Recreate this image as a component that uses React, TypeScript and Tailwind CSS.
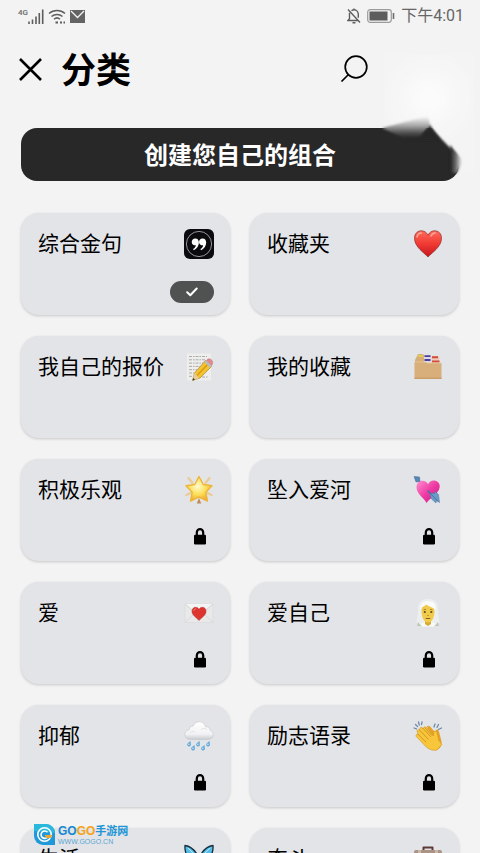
import React from "react";

const categories: { name: string; icon: React.ReactNode; state?: "selected" | "locked" }[] = [
  { name: "综合金句", icon: <QuoteIcon />, state: "selected" },
  { name: "收藏夹", icon: <HeartIcon /> },
  { name: "我自己的报价", icon: <MemoIcon /> },
  { name: "我的收藏", icon: <DividersIcon /> },
  { name: "积极乐观", icon: <StarIcon />, state: "locked" },
  { name: "坠入爱河", icon: <ArrowHeartIcon />, state: "locked" },
  { name: "爱", icon: <LoveLetterIcon />, state: "locked" },
  { name: "爱自己", icon: <VeilIcon />, state: "locked" },
  { name: "抑郁", icon: <RainIcon />, state: "locked" },
  { name: "励志语录", icon: <ClapIcon />, state: "locked" },
  { name: "生活", icon: <ButterflyIcon />, state: "locked" },
  { name: "奋斗", icon: <BriefcaseIcon />, state: "locked" },
];

function Emoji({ children }: { children: React.ReactNode }) {
  return (
    <svg viewBox="0 0 30 30" className="size-[30px] shrink-0" aria-hidden="true">
      {children}
    </svg>
  );
}

function QuoteIcon() {
  return (
    <Emoji>
      <rect x="0" y="0" width="30" height="30" rx="6" fill="#0b0b0f" />
      <circle cx="15" cy="15" r="12.6" fill="none" stroke="#b9b9bd" strokeWidth="0.8" />
      <path d="M11.4 9.500a3.400 3.400 0 1 0 .5 6.700c-.3 1.700-1.300 3-2.900 3.900l.9 1.200c3.100-1.500 5-4.500 5-7.700 0-2.500-1.400-4.100-3.500-4.100z" fill="#fff" />
      <path d="M18.700 9.500a3.400 3.400 0 1 0 .5 6.700c-.3 1.700-1.300 3-2.900 3.900l.9 1.200c3.100-1.500 5-4.500 5-7.700 0-2.500-1.400-4.100-3.500-4.100z" fill="#fff" />
    </Emoji>
  );
}

function HeartIcon() {
  return (
    <Emoji>
      <defs>
        <linearGradient id="heart" x1="0" y1="0" x2="0" y2="1">
          <stop offset="0" stopColor="#ff6a5a" />
          <stop offset="0.5" stopColor="#f03a34" />
          <stop offset="1" stopColor="#c5161b" />
        </linearGradient>
      </defs>
      <path
        d="M15 28C11 23.500 1.500 18 1.500 9.200 1.500 4.500 4.600 1.800 8.300 1.800c3 0 5.400 1.600 6.700 4.400 1.300-2.800 3.700-4.400 6.700-4.400 3.700 0 6.800 2.700 6.800 7.400C28.500 18 19 23.500 15 28z"
        fill="url(#heart)"
        stroke="#8f2a2a"
        strokeWidth="0.7"
      />
      <path d="M4 8c.5-2.600 2.300-4 4.500-4M18 7c.9-1.900 2.300-3 4.200-3" stroke="#ffa79a" strokeWidth="1.400" fill="none" strokeLinecap="round" />
    </Emoji>
  );
}

function MemoIcon() {
  return (
    <Emoji>
      <path d="M3 1.500h24v27H3z" fill="#eeeeec" />
      <path
        d="M5 4.500h18M5 7.800h17M5 11.100h14M5 14.400h11M5 17.700h8M5 21h5M5 24.300h4M18 25h6"
        stroke="#a3a3a6"
        strokeWidth="0.9"
        strokeDasharray="3 1 1.500 1"
      />
      <path d="M21.500 8.500l6 6L16 26l-7.500 2.500 2-7.500z" fill="#f4c430" stroke="#9b7420" strokeWidth="0.6" />
      <path d="M24.500 11.500L13 23.500" stroke="#d99a16" strokeWidth="1.600" />
      <path d="M20.500 10l2-1.800 5.300 5.500-2 2z" fill="#b8bcc0" />
      <path d="M22.500 8.200c1.500-1.800 3.500-1.800 5-.3s1.500 3.500.2 5.500z" fill="#e7888d" stroke="#a96468" strokeWidth="0.4" />
      <path d="M10.500 21l-2 7.500L15 26.200z" fill="#e8cd9c" />
      <path d="M9.200 26l-.7 2.500 2.500-.8z" fill="#333" />
    </Emoji>
  );
}

function DividersIcon() {
  return (
    <Emoji>
      <path d="M2 8l3-6h5l2 3v6H2z" fill="#d5ae78" />
      <path d="M5.500 3h4l1 2h-6z" fill="#e3cc55" />
      <path d="M11 3h7v8h-7z" fill="#ded7ec" />
      <path d="M11.500 3.300h6v1.800h-6zM11.500 7h6v2h-6z" fill="#4c4099" />
      <path d="M18.500 4h7l1 2v5h-8z" fill="#efc9bb" />
      <path d="M19 4.300h6v2h-6zM19 8.500h7.500v2H19z" fill="#d04e38" />
      <path d="M1.500 10h11l2 1h14v16h-27z" fill="#d8ae7b" />
      <path d="M1.500 25.500h27V27h-27z" fill="#cb9e69" />
      <path d="M2 10h10.500l2 1h13.500" stroke="#eacb9f" strokeWidth="0.8" fill="none" />
    </Emoji>
  );
}

function StarIcon() {
  return (
    <Emoji>
      <defs>
        <radialGradient id="star" cx="0.45" cy="0.4" r="0.6">
          <stop offset="0" stopColor="#fffbd0" />
          <stop offset="0.55" stopColor="#fce05a" />
          <stop offset="1" stopColor="#efa62c" />
        </radialGradient>
      </defs>
      <path d="M4.500 3l4 5M25.500 3l-4 5M2.500 20l4-2M27.500 20l-4-2" stroke="#e9cd98" strokeWidth="2.400" strokeLinecap="round" />
      <path d="M15 23l2.200 5.500h-4.400z" fill="#c08a55" />
      <path
        d="M15 1.500l4.200 8 8.800 1.300-6.200 6.400 1.700 9-8.500-4-8.500 4 1.700-9L2 10.800l8.800-1.300z"
        fill="url(#star)"
        stroke="#eeb53c"
        strokeWidth="1.400"
        strokeLinejoin="round"
      />
    </Emoji>
  );
}

function ArrowHeartIcon() {
  return (
    <Emoji>
      <defs>
        <linearGradient id="pink" x1="0" y1="0" x2="1" y2="1">
          <stop offset="0" stopColor="#ff8fd0" />
          <stop offset="0.5" stopColor="#ef3aa4" />
          <stop offset="1" stopColor="#c11b80" />
        </linearGradient>
      </defs>
      <path d="M4 4l6 6" stroke="#5a7fa8" strokeWidth="1.500" />
      <path d="M1 1.500l5.500.5.500 4.500-4 .500z" fill="#5687b5" stroke="#426b91" strokeWidth="0.5" />
      <path
        d="M13.500 28C11 22.500 3.500 19 3.500 12.200c0-4 2.600-6.500 5.800-6.500 2.800 0 4.700 1.300 5.700 3.600 1.200-2.600 3.500-4 6.200-3.700 3.800.4 6 3.300 5.400 6.900-1 6.300-9.300 10.300-13.100 15.500z"
        fill="url(#pink)"
      />
      <path d="M14.500 15.500l8 8" stroke="#4773a1" strokeWidth="1.400" />
      <path d="M16.500 18l5 .5.500-2 3.500 3 1 8-3-2-.5 2.500-4.500-4z" fill="#6b9bc7" stroke="#4a74a0" strokeWidth="0.5" />
      <path d="M17 18L25 26.500" stroke="#3e6998" strokeWidth="0.8" />
    </Emoji>
  );
}

function LoveLetterIcon() {
  return (
    <Emoji>
      <path d="M1 6h28v18.500H1z" fill="#e9e9e9" stroke="#d8d8da" strokeWidth="0.6" />
      <path d="M1 24.500l10.500-10M29 24.500l-10.500-10" stroke="#d3d3d6" strokeWidth="0.8" />
      <path d="M1 6l14 12L29 6" fill="#f4f4f4" stroke="#c9c9cc" strokeWidth="0.8" />
      <path
        d="M15 22.500c-2-2.600-7-5-7-9.200 0-2.500 1.600-4 3.600-4 1.600 0 2.700.8 3.400 2.200.7-1.400 1.800-2.200 3.400-2.200 2 0 3.600 1.500 3.600 4 0 4.200-5 6.600-7 9.200z"
        fill="#dd3430"
        stroke="#a82525"
        strokeWidth="0.5"
      />
      <path d="M9.800 12.500c.2-1 1-1.700 1.900-1.700" stroke="#f58b80" strokeWidth="0.900" fill="none" strokeLinecap="round" />
    </Emoji>
  );
}

function VeilIcon() {
  return (
    <Emoji>
      <path d="M15 1C7 1 4.500 6 5 12c.3 5-1.500 9-1.500 12l2 4.500h19l2-4.500c0-3-1.800-7-1.500-12C25.500 6 23 1 15 1z" fill="#ecefee" />
      <path d="M6 28.500c0-3 3.500-4.500 9-4.500s9 1.500 9 4.500z" fill="#fafafa" />
      <path d="M4 28l1-4 4 4.500zM26 28l-1-4-4 4.500z" fill="#bccbb8" />
      <path d="M12 22h6v4l-3 2-3-2z" fill="#d8aa31" />
      <path d="M8.500 13c0-5 2.500-7.500 6.500-7.500s6.500 2.500 6.500 7.500c0 7-3 11.500-6.500 11.500S8.500 20 8.500 13z" fill="#f0cb4c" />
      <path d="M7.500 13c0-4 3-4 6-6.500 2 2.500 8 2.500 9 6.500 1-6-1.500-10-7.500-10S6.500 7 7.500 13z" fill="#fbfbfb" />
      <circle cx="11.800" cy="14" r="1.100" fill="#5f4a1c" />
      <circle cx="18.300" cy="14" r="1.100" fill="#5f4a1c" />
      <path d="M10.500 11.800l2.500-.5M17 11.300l2.500.5M14.300 17.500h1.400" stroke="#9b7320" strokeWidth="0.800" />
      <path d="M13.200 20.500h3.600" stroke="#8d5a26" strokeWidth="1.200" fill="none" strokeLinecap="round" />
    </Emoji>
  );
}

function RainIcon() {
  return (
    <Emoji>
      <defs>
        <linearGradient id="cloud" x1="0" y1="0" x2="0" y2="1">
          <stop offset="0" stopColor="#ffffff" />
          <stop offset="0.7" stopColor="#f2f2f4" />
          <stop offset="1" stopColor="#c7cacf" />
        </linearGradient>
      </defs>
      <path
        d="M6.500 18.500C3 18.500.8 16.500.8 13.600c0-2.700 1.900-4.500 4.400-4.800C5.300 6.500 7 5 9.300 5c.8-2.600 3-4.300 5.900-4.300 3.300 0 5.800 2.100 6.300 5.100 2.400-.3 4.400 1.200 4.700 3.500 1.800.6 3 2.200 3 4.300 0 2.900-2.200 4.900-5.500 4.900z"
        fill="url(#cloud)"
        stroke="#c3c6cb"
        strokeWidth="0.6"
      />
      <path d="M6 12c1.500-2 4-2 5.500-.5M17 9c1.500-2 4-2.300 6-.5" stroke="#dddfe3" strokeWidth="0.900" fill="none" />
      <g fill="#63a9d8">
        <path d="M6.500 20l.3 2.800a1.900 1.900 0 1 1-2.800-.8z" />
        <path d="M15.500 20l.3 2.800a1.900 1.900 0 1 1-2.800-.8z" />
        <path d="M25.500 20l.3 2.800a1.900 1.900 0 1 1-2.800-.8z" />
        <path d="M10.500 24l.3 2.800a1.900 1.900 0 1 1-2.800-.8z" />
        <path d="M20.500 24l.3 2.800a1.900 1.900 0 1 1-2.800-.8z" />
      </g>
      <g fill="#cfe8f7">
        <circle cx="4.900" cy="23.300" r="0.800" />
        <circle cx="13.900" cy="23.300" r="0.800" />
        <circle cx="23.900" cy="23.300" r="0.800" />
        <circle cx="8.900" cy="27.300" r="0.800" />
        <circle cx="18.900" cy="27.300" r="0.800" />
      </g>
    </Emoji>
  );
}

function ClapIcon() {
  return (
    <Emoji>
      <g stroke="#6d8ba8" strokeWidth="1.300" strokeLinecap="round">
        <path d="M5.500 1l.8 3M2.500 3.500l2 2M1 7l2.500.8M9 1L8.500 3.500M22 3l-1 3M25.500 3.500L24 6.500M28.500 7l-3 1.500" />
      </g>
      <path
        d="M14 5.500c1-1.300 2.500-.8 3.300.2l5.200 6c-.2-1.900.3-3.200 1.600-3.300 1.200 0 1.600 1 1.900 2.300l2.200 8.300c1.300 4.800-1 9-4.200 9.800z"
        fill="#e4a229"
      />
      <path
        d="M3.300 15.500c-1-1.300.6-3 2-2L4.300 11c-1-1.500 1-3.200 2.300-1.900L6.800 7.500c.5-1.500 2-1.300 3-.3l1-.2c.4-1.600 2-1.400 3-.3l6.700 8c.2-2.300-.2-4.500 1.600-4.700 1.500-.2 2 1.300 2.200 2.700l1.500 6.500 3 4.300-4.800 5.500c-3.500 1-7.500-.3-10.700-3z"
        fill="#f8c63b"
        stroke="#d2921f"
        strokeWidth="0.6"
      />
      <path d="M5.300 13.500l7.500 7.500M6.600 9.100l8.600 9M9.800 7.200l7.700 8.300M12.500 7.500l6.500 7" stroke="#cc8e20" strokeWidth="0.900" fill="none" strokeLinecap="round" />
    </Emoji>
  );
}

function ButterflyIcon() {
  return (
    <Emoji>
      <g fill="#55bde8" stroke="#172c3c" strokeWidth="1.300" strokeLinejoin="round">
        <path d="M14.500 13C11 6 6 2 1 1.500c-.5 6 2 12.500 6 14-3 2-2.500 8 1 9.500s6-3 6.500-8z" />
        <path d="M15.500 13C19 6 24 2 29 1.500c.5 6-2 12.500-6 14 3 2 2.500 8-1 9.500s-6-3-6.500-8z" />
      </g>
      <path d="M4 4l9 9M26 4l-9 9" stroke="#b5e8fa" strokeWidth="1" />
      <path d="M15 10v12" stroke="#26211f" strokeWidth="2" strokeLinecap="round" />
    </Emoji>
  );
}

function BriefcaseIcon() {
  return (
    <Emoji>
      <path d="M10.500 7V3.500h9V7" fill="none" stroke="#5d3a34" strokeWidth="2" strokeLinejoin="round" />
      <rect x="1" y="6" width="28" height="20" rx="2" fill="#ab9486" />
      <path d="M1 14h28" stroke="#735546" strokeWidth="1" />
      <path d="M5 6h3v20H5zM22 6h3v20h-3z" fill="#c9b8a8" />
      <rect x="13" y="12" width="4" height="4" fill="#d8c5a2" />
    </Emoji>
  );
}

function LockIcon() {
  return (
    <svg viewBox="0 0 12 17" className="mr-2 h-[17px] w-3" role="img" aria-label="locked">
      <path d="M2.800 8V4.400a3.200 3.200 0 0 1 6.400 0V8" fill="none" stroke="#000" strokeWidth="2.200" />
      <rect x="0" y="6.800" width="12" height="9.700" rx="1.200" fill="#000" />
    </svg>
  );
}

function CategoryCard({ name, icon, state }: (typeof categories)[number]) {
  return (
    <button className="flex h-[102px] flex-col justify-between rounded-[18px] bg-[#e3e4e8] pt-4 pr-4 pl-[17px] text-left shadow-[0_1px_3px_rgba(0,0,0,0.18)]">
      <span className="flex w-full items-start justify-between">
        <span className="text-[21px] leading-[26px] whitespace-nowrap text-black">{name}</span>
        {icon}
      </span>
      {state === "selected" && (
        <span className="mb-3 flex h-[22px] w-11 items-center justify-center self-end rounded-full bg-[#505151]">
          <svg viewBox="0 0 12 10" className="h-[10px] w-3" role="img" aria-label="selected">
            <path d="M1.200 5.200l3.100 3L10.700 1.500" fill="none" stroke="#fff" strokeWidth="2" strokeLinecap="round" strokeLinejoin="round" />
          </svg>
        </span>
      )}
      {state === "locked" && (
        <span className="mb-4 self-end">
          <LockIcon />
        </span>
      )}
    </button>
  );
}

function StatusBar() {
  return (
    <div className="flex h-8 items-center justify-between pr-4 pl-[18px] text-[#666]">
      <div className="flex items-center gap-1">
        <div className="flex items-start">
          <span className="font-['Roboto',sans-serif] text-[8px] leading-[8px] font-medium">4G</span>
          <svg viewBox="0 0 16 15" className="h-[15px] w-4" aria-hidden="true">
            <path d="M1 12.500V15M4.500 10.500V15M8 7.500V15M11.300 4V15M14.700 .5V15" stroke="#5d5d5d" strokeWidth="1.600" />
          </svg>
        </div>
        <svg viewBox="0 0 18 15" className="h-[15px] w-[18px]" fill="none" stroke="#5d5d5d" aria-hidden="true">
          <path d="M1 4.500a12 12 0 0 1 16 0M3.500 7.500a8.200 8.200 0 0 1 11 0M6 10.200a4.500 4.500 0 0 1 6 0" strokeWidth="1.500" />
          <path d="M7.500 13.500h2.500M12 13.500h2M15.500 13.500h1.500" strokeWidth="2" />
        </svg>
        <svg viewBox="0 0 15 13" className="h-[13px] w-[15px]" aria-hidden="true">
          <path d="M0 0h15v13H0z" fill="#636363" />
          <path d="M1 1l6.500 6.500L14 1" fill="none" stroke="#f3f3f3" strokeWidth="1.300" />
        </svg>
      </div>
      <div className="flex items-center gap-1.5">
        <svg viewBox="0 0 14 16" className="h-4 w-[14px]" fill="none" stroke="#5d5d5d" strokeWidth="1.400" aria-hidden="true">
          <path d="M1 1.500l12 13M2.500 4.800v6L1 12.500h10M4.500 2.700C5.200 2.200 6 1.800 7 1.800c2.600 0 4.300 2 4.300 4.500v3.500M7 .5v1.300M5.500 14.700h3" />
        </svg>
        <svg viewBox="0 0 28 14" className="h-[14px] w-7" aria-hidden="true">
          <rect x="0.700" y="0.700" width="23.600" height="12.600" rx="2.500" fill="none" stroke="#9b9b9b" strokeWidth="1.200" />
          <rect x="2.500" y="2.500" width="18" height="9" fill="#5d5d5d" />
          <path d="M26.500 4v6" stroke="#6d6d6d" strokeWidth="1.600" />
        </svg>
        <span className="font-['Roboto','Noto_Sans_CJK_SC',sans-serif] text-base leading-5">下午4:01</span>
      </div>
    </div>
  );
}

// soft light patch that fades out the end of the banner
function Smudge() {
  return (
    <svg viewBox="380 50 100 130" className="pointer-events-none absolute -top-[78px] -right-[21px] h-[130px] w-[100px]" aria-hidden="true">
      <defs>
        <radialGradient id="glow" gradientUnits="userSpaceOnUse" cx="430" cy="98" r="48">
          <stop offset="0" stopColor="#fcfcfc" />
          <stop offset="1" stopColor="#f4f4f4" />
        </radialGradient>
        <linearGradient id="fade" gradientUnits="userSpaceOnUse" x1="0" y1="117" x2="0" y2="138">
          <stop offset="0" stopColor="#f5f5f5" />
          <stop offset="0.4" stopColor="#aaa" />
          <stop offset="0.75" stopColor="#505050" />
          <stop offset="1" stopColor="#282828" />
        </linearGradient>
        <linearGradient id="side" gradientUnits="userSpaceOnUse" x1="451" y1="0" x2="462" y2="0">
          <stop offset="0" stopColor="#282828" />
          <stop offset="0.5" stopColor="#777" />
          <stop offset="1" stopColor="#f4f4f4" />
        </linearGradient>
        <filter id="soft" x="-20%" y="-20%" width="140%" height="140%">
          <feGaussianBlur stdDeviation="1" />
        </filter>
      </defs>
      <path d="M384 54H474V172H460L456 154 430 127H384z" fill="url(#glow)" filter="url(#soft)" />
      <path d="M382 128L428 116 430 125 418 140H408z" fill="url(#fade)" filter="url(#soft)" />
      <path d="M430 125L418 140H440z" fill="#282828" filter="url(#soft)" />
      <path d="M450 145L463 161 457 173H450z" fill="url(#side)" filter="url(#soft)" />
    </svg>
  );
}

function Watermark() {
  return (
    <div className="pointer-events-none absolute bottom-2 left-[34px] flex items-center gap-[3px]">
      <svg viewBox="0 0 21 21" className="size-[21px]" aria-hidden="true">
        <path d="M0 0h12a9 9 0 0 1 9 9v12H9a9 9 0 0 1-9-9z" fill="#2199d8" />
        <path d="M0 0h12a9 9 0 0 1 9 9L0 7z" fill="#29b9dc" />
        <circle cx="10.500" cy="10.500" r="6.700" fill="none" stroke="#fff" strokeWidth="1.600" />
        <path d="M13.500 8.200a3.700 3.700 0 1 0 0 5" fill="none" stroke="#fff" strokeWidth="1.600" />
        <path d="M10.500 11h8l-2 3h-4z" fill="#f2a431" />
      </svg>
      <div className="font-['Liberation_Sans','Noto_Sans_CJK_SC',sans-serif] font-bold">
        <div className="flex items-center text-xs leading-[14px]">
          <span className="text-[#1688d0]">GO</span>
          <span className="text-[#f6a316]">GO</span>
          <span className="text-[11px] text-[#2095d6]">手游网</span>
        </div>
        <div className="text-[7px] leading-[7px] font-normal text-[#5aa5d2]">WWW.GOGO.CN</div>
      </div>
    </div>
  );
}

export default function App() {
  return (
    <div className="relative h-screen overflow-hidden bg-[#f3f3f3] font-['Noto_Sans_CJK_SC',sans-serif]">
      <StatusBar />
      <header className="flex h-[74px] items-center pl-[18px]">
        <button aria-label="关闭">
          <svg viewBox="0 0 25 25" className="size-[25px]" aria-hidden="true">
            <path d="M2 2l21 21M23 2L2 23" stroke="#000" strokeWidth="2.600" />
          </svg>
        </button>
        <h1 className="ml-[18px] pb-0.5 text-[35px] leading-[48px] font-bold text-black">分类</h1>
        <button aria-label="搜索" className="mr-28 ml-auto">
          <svg viewBox="0 0 28 28" className="size-7" fill="none" stroke="#000" strokeWidth="1.700" aria-hidden="true">
            <circle cx="16" cy="12" r="10.800" />
            <path d="M8.500 19.500L1.500 26.500" />
          </svg>
        </button>
      </header>
      <main className="px-[21px] pt-[22px]">
        <div className="relative">
          <button className="h-[53px] w-full rounded-2xl bg-[#282828] pb-0.5 text-2xl font-bold text-white">创建您自己的组合</button>
          <Smudge />
        </div>
        <div className="mt-8 grid grid-cols-2 gap-x-5 gap-y-[21px]">
          {categories.map((c) => (
            <CategoryCard key={c.name} {...c} />
          ))}
        </div>
      </main>
      <Watermark />
    </div>
  );
}
